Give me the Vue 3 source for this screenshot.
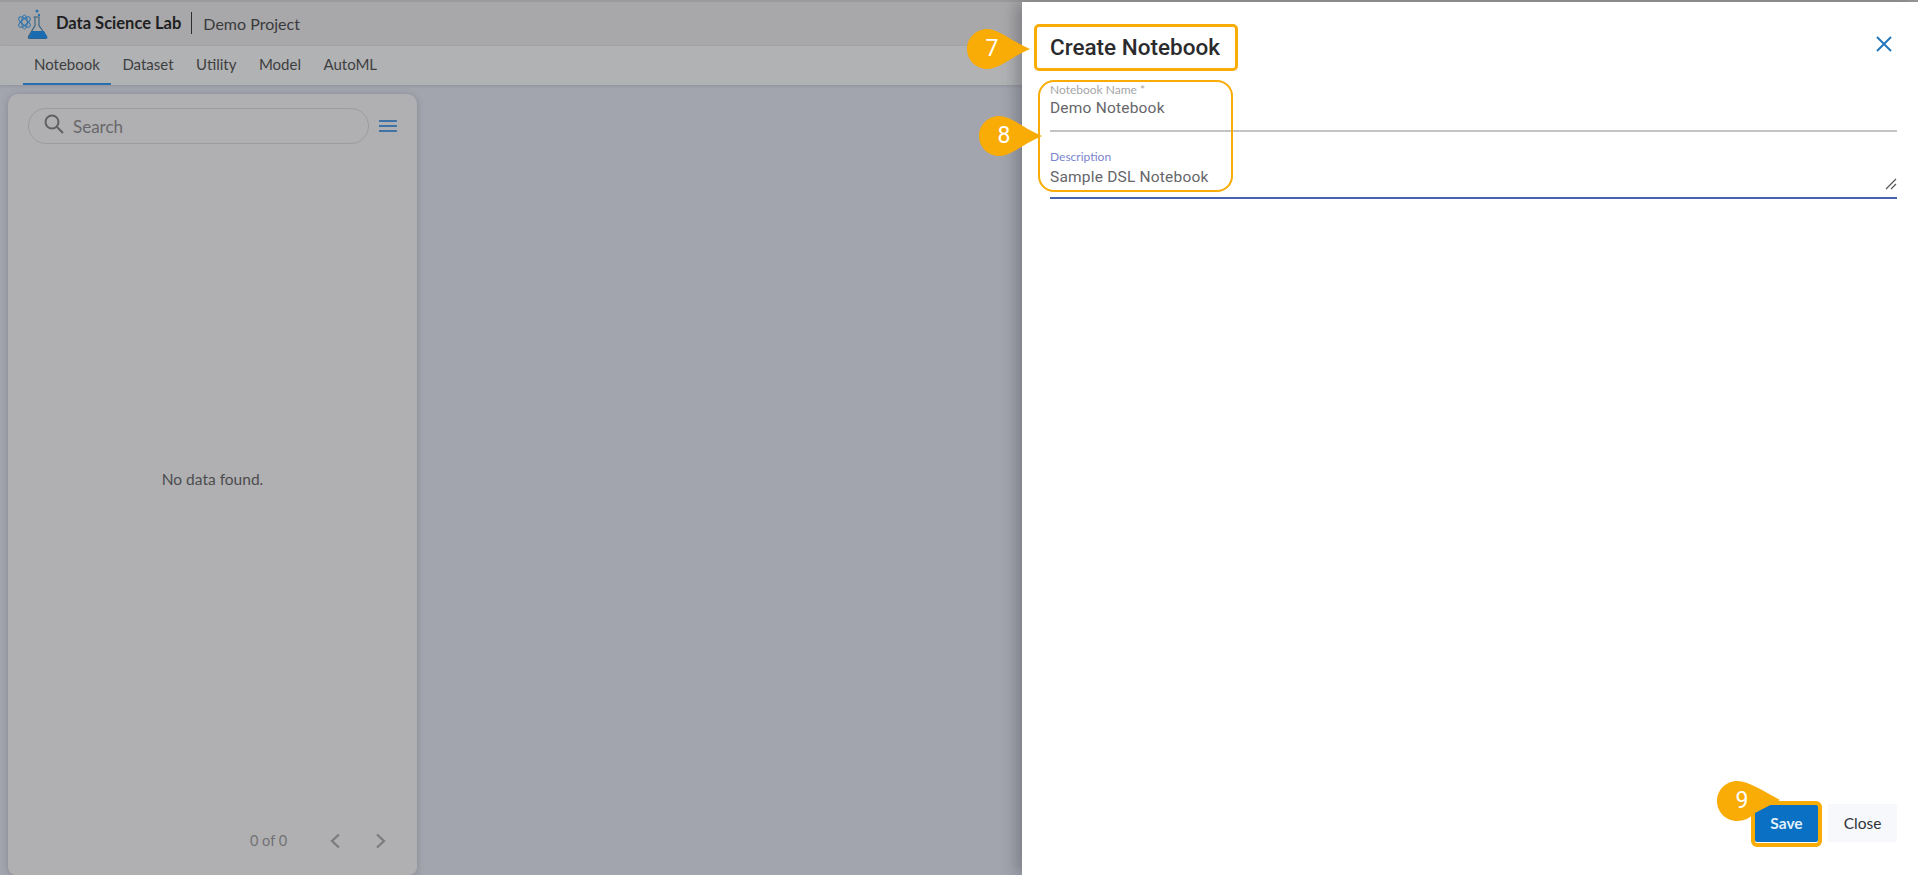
<script setup>
const tabs = ['Notebook', 'Dataset', 'Utility', 'Model', 'AutoML']
const callouts = [
  { n: 7, x: 967, y: 29 },
  { n: 8, x: 979, y: 116 },
  { n: 9, x: 1717, y: 781, tilt: true },
]
</script>

<template>
  <div class="page">
    <header class="topbar">
      <svg class="logo" viewBox="0 0 32 32" width="32" height="32" fill="none">
        <g stroke="#2a72ad" stroke-width="1">
          <ellipse cx="6.500" cy="14" rx="7" ry="2.800" transform="rotate(40 6.500 14)" />
          <ellipse cx="6.500" cy="14" rx="7" ry="2.800" transform="rotate(-40 6.500 14)" />
          <ellipse cx="6.500" cy="14" rx="2.800" ry="7" />
        </g>
        <path d="M15.500 9h6M17 9v8.500L10.500 28.500q-.5 2 1 2h16q1.500 0 1-2L21 17.500V9" stroke="#35607f" stroke-width="1.100" />
        <path d="M14 23h12l3.500 6.500q0 1-1.500 1H12q-1.500 0-1.500-1z" fill="#1a6bb0" />
        <circle cx="21" cy="7" r="1.200" fill="#2a72ad" />
        <circle cx="19" cy="3" r="1.500" fill="#2a72ad" />
      </svg>
      <span class="app-name">Data Science Lab</span>
      <span class="divider"></span>
      <span class="project">Demo Project</span>
    </header>

    <nav class="tabs">
      <a v-for="(t, i) in tabs" :key="t" class="tab" :class="{ active: i === 0 }">{{ t }}</a>
    </nav>

    <main class="content">
      <section class="card">
        <div class="search-row">
          <div class="search">
            <svg viewBox="0 0 24 24" width="24" height="24" fill="none" stroke="#5f6062" stroke-width="2">
              <circle cx="10" cy="10" r="6.500" />
              <path d="M15 15l6 6" />
            </svg>
            <span>Search</span>
          </div>
          <svg class="menu" viewBox="0 0 18 14" width="18" height="14" fill="none" stroke="#3f73a5" stroke-width="2">
            <path d="M0 2h18M0 7h18M0 12h18" />
          </svg>
        </div>
        <div class="empty">No data found.</div>
        <div class="pager">
          <span>0 of 0</span>
          <svg viewBox="0 0 12 16" width="12" height="16" fill="none" stroke="#7b7b7d" stroke-width="2.200"><path d="M10 1.500 3 8l7 6.500" /></svg>
          <svg viewBox="0 0 12 16" width="12" height="16" fill="none" stroke="#7b7b7d" stroke-width="2.200"><path d="M2 1.500 9 8l-7 6.500" /></svg>
        </div>
      </section>
    </main>

    <aside class="drawer">
      <div class="drawer-head">
        <h1 class="title">Create Notebook</h1>
        <svg class="close-x" viewBox="0 0 16 16" width="16" height="16" fill="none" stroke="#2277bd" stroke-width="2">
          <path d="M1 1l14 14M15 1 1 15" />
        </svg>
      </div>
      <form class="form">
        <div class="field name">
          <label>Notebook Name *</label>
          <div class="value">Demo Notebook</div>
        </div>
        <div class="field desc">
          <label>Description</label>
          <div class="value">Sample DSL Notebook</div>
          <svg class="grip" viewBox="0 0 12 12" width="12" height="12" fill="none" stroke="#555" stroke-width="1.200">
            <path d="M1 11 11 1M6 11l5-5" />
          </svg>
        </div>
      </form>
      <div class="spacer"></div>
      <footer class="actions">
        <button type="button" class="btn save">Save</button>
        <button type="button" class="btn close">Close</button>
      </footer>
    </aside>

    <div class="hl hl-title"></div>
    <div class="hl hl-form"></div>
    <div class="hl hl-save"></div>

    <div
      v-for="c in callouts"
      :key="c.n"
      class="callout"
      :style="{ left: c.x + 'px', top: c.y + 'px' }"
    >
      <svg viewBox="0 0 64 40" width="64" height="40">
        <path
          :d="c.tilt
            ? 'M20 0C32 0 46 10 63 19L38 32C33 37 27 40 20 40 9 40 0 31 0 20S9 0 20 0Z'
            : 'M20 0C32 0 44 12 63 20 44 28 32 40 20 40 9 40 0 31 0 20S9 0 20 0Z'"
          fill="#f9ab06"
        />
      </svg>
      <span>{{ c.n }}</span>
    </div>
  </div>
</template>

<style>
html, body { margin: 0; background: #a2a5ae; overflow: hidden; }
</style>

<style scoped>
.page {
  position: relative;
  width: 1918px;
  height: 875px;
  box-sizing: border-box;
  padding-top: 2px;
  display: flex;
  flex-direction: column;
  overflow: hidden;
  background: #a2a5ae;
  font-family: Lato, "Noto Sans", sans-serif;
  color: #3c3c3e;
}
.page::before {
  content: "";
  position: absolute;
  inset: 0 0 auto 0;
  height: 2px;
  background: #9a9a9c;
}
.topbar {
  height: 44px;
  flex: none;
  display: flex;
  align-items: center;
  padding-left: 18px;
  padding-bottom: 2px;
  box-sizing: border-box;
  background: #a8a8aa;
}
.logo { margin-right: 6px; margin-top: 2px; }
.app-name { font-size: 16.500px; font-weight: 700; color: #1f1f21; }
.divider { width: 1px; height: 22px; margin: 0 11px 0 10px; background: #2e2e30; }
.project { font-size: 16px; color: #3a3a3c; }
.tabs {
  height: 39px;
  flex: none;
  display: flex;
  padding-left: 23px;
  background: #b1b2b4;
  box-shadow: 0 1px 3px rgba(90, 90, 100, .25);
}
.tab {
  padding: 0 11px;
  margin-right: .5px;
  line-height: 37px;
  font-size: 15px;
  color: #3e3e40;
  border-bottom: 2px solid transparent;
}
.tab.active { border-bottom-color: #2770ad; }
.content { flex: 1; min-height: 0; padding: 9px 0 0 8px; display: flex; }
.card {
  width: 409px;
  box-sizing: border-box;
  display: flex;
  flex-direction: column;
  background: #b0b0b2;
  border-radius: 10px 10px 8px 8px;
  box-shadow: 0 1px 6px rgba(80, 80, 90, .35);
  padding: 14px 20px 26px;
}
.search-row { display: flex; align-items: center; gap: 10px; }
.search {
  width: 343px;
  height: 36px;
  box-sizing: border-box;
  display: flex;
  align-items: center;
  gap: 7px;
  padding-left: 13px;
  border: 1px solid #9c9c9e;
  border-radius: 18px;
  font-size: 17px;
  color: #68686a;
}
.search svg { margin-top: -5px; }
.empty { flex: 1; padding-top: 326px; text-align: center; font-size: 15.500px; color: #4c4c4e; }
.pager {
  display: flex;
  align-items: center;
  padding-left: 222px;
  font-size: 14.500px;
  color: #727274;
}
.pager svg:first-of-type { margin-left: 42px; margin-right: 34px; }
.drawer {
  position: absolute;
  left: 1022px;
  top: 2px;
  bottom: 0;
  width: 896px;
  display: flex;
  flex-direction: column;
  box-sizing: border-box;
  padding: 0 21px 33px 28px;
  background: #fff;
  box-shadow: -6px 0 14px rgba(70, 70, 80, .4);
}
.drawer-head {
  height: 78px;
  flex: none;
  display: flex;
  justify-content: space-between;
  align-items: center;
}
.title { margin: 12px 0 0; font: 500 22.500px Roboto, sans-serif; color: #2b2b2d; }
.close-x { margin-right: 5px; margin-top: 6px; }
.form { display: flex; flex-direction: column; gap: 15px; }
.field { position: relative; box-sizing: border-box; padding-top: 4px; }
.field.name { height: 52px; border-bottom: 2px solid #c4c4c4; }
.field.desc { height: 52px; border-bottom: 2px solid #4a63b0; }
.field label { display: block; font-size: 12px; line-height: 12px; color: #a6a6a8; }
.field.desc label { color: #7b85cf; }
.value { margin-top: 1px; font: 15.500px/22px Roboto, sans-serif; letter-spacing: .2px; color: #66666a; }
.desc .value { margin-top: 3px; }
.grip { position: absolute; right: 0; bottom: 7px; }
.spacer { flex: 1; }
.actions { display: flex; justify-content: flex-end; align-items: center; gap: 10px; }
.btn {
  height: 38px;
  box-sizing: border-box;
  border: 0;
  border-radius: 2px;
  font-family: Lato, sans-serif;
  font-size: 15.500px;
}
.save { width: 63px; background: #0a70c4; color: #e0f0fb; font-weight: 700; }
.close { width: 69px; background: #f7f8fb; color: #2e3338; }
.hl { position: absolute; box-sizing: border-box; border: 3px solid #f9ab06; border-radius: 5px; }
.hl-title { left: 1034px; top: 24px; width: 204px; height: 47px; }
.hl-form { left: 1038px; top: 80px; width: 195px; height: 112px; border-width: 2px; border-radius: 16px; }
.hl-save { left: 1751px; top: 801px; width: 71px; height: 46px; border-width: 4px; border-radius: 6px; }
.callout {
  position: absolute;
  width: 64px;
  height: 40px;
}
.callout svg { display: block; }
.callout span {
  position: absolute;
  left: 0;
  top: 0;
  width: 50px;
  text-align: center;
  font: 400 23px/40px Roboto, sans-serif;
  color: #fff;
}
</style>
